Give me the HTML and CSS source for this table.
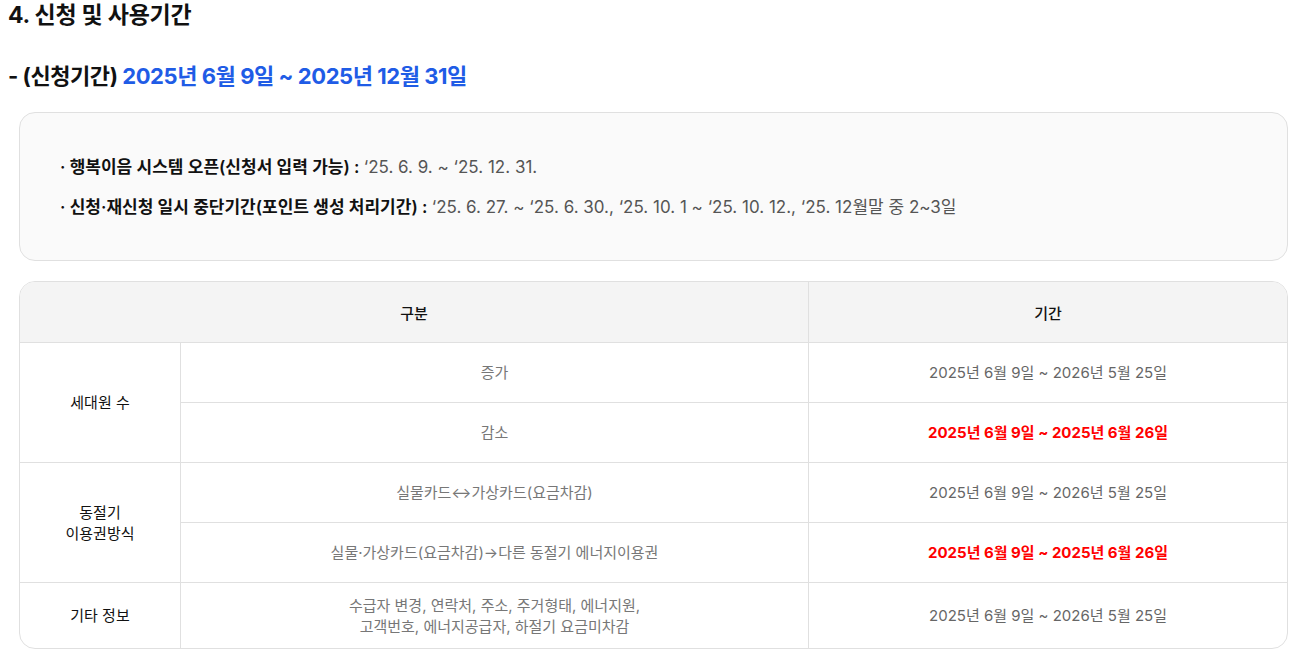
FILE: index.html
```html
<!DOCTYPE html>
<html lang="ko">
<head>
<meta charset="utf-8">
<title>신청 및 사용기간</title>
<link rel="stylesheet" href="styles.css">
</head>
<body>
<section class="section">
  <h2 class="title">4. 신청 및 사용기간</h2>
  <h3 class="subtitle">- (신청기간) <span class="blue">2025년 6월 9일 ~ 2025년 12월 31일</span></h3>

  <div class="info-box">
    <p class="info-line"><strong class="label">· 행복이음 시스템 오픈(신청서 입력 가능) : </strong><span class="value">‘25. 6. 9. ~ ‘25. 12. 31.</span></p>
    <p class="info-line"><strong class="label">· 신청·재신청 일시 중단기간(포인트 생성 처리기간) : </strong><span class="value">‘25. 6. 27. ~ ‘25. 6. 30., ‘25. 10. 1 ~ ‘25. 10. 12., ‘25. 12월말 중 2~3일</span></p>
  </div>

  <div class="table-wrap">
    <table class="period-table">
      <colgroup>
        <col class="c1">
        <col class="c2">
        <col class="c3">
      </colgroup>
      <thead>
        <tr class="head-row">
          <th colspan="2" class="first">구분</th>
          <th>기간</th>
        </tr>
      </thead>
      <tbody>
        <tr class="row">
          <td rowspan="2" class="first cat">세대원 수</td>
          <td class="item">증가</td>
          <td class="date">2025년 6월 9일 ~ 2026년 5월 25일</td>
        </tr>
        <tr class="row">
          <td class="item">감소</td>
          <td class="date red">2025년 6월 9일 ~ 2025년 6월 26일</td>
        </tr>
        <tr class="row">
          <td rowspan="2" class="first cat">동절기<br>이용권방식</td>
          <td class="item">실물카드↔가상카드(요금차감)</td>
          <td class="date">2025년 6월 9일 ~ 2026년 5월 25일</td>
        </tr>
        <tr class="row">
          <td class="item">실물·가상카드(요금차감)→다른 동절기 에너지이용권</td>
          <td class="date red">2025년 6월 9일 ~ 2025년 6월 26일</td>
        </tr>
        <tr class="row last">
          <td class="first cat">기타 정보</td>
          <td class="item">수급자 변경, 연락처, 주소, 주거형태, 에너지원,<br>고객번호, 에너지공급자, 하절기 요금미차감</td>
          <td class="date">2025년 6월 9일 ~ 2026년 5월 25일</td>
        </tr>
      </tbody>
    </table>
  </div>
</section>
</body>
</html>
```

FILE: styles.css
```css
* { box-sizing: border-box; }

html, body {
  margin: 0;
  padding: 0;
  background: #ffffff;
}

body {
  font-family: Inter, "Noto Sans CJK KR", sans-serif;
  color: #111111;
}

.section {
  padding: 0 19px 0 8px;
}

.title {
  margin: 0;
  font-size: 23px;
  line-height: 30px;
  font-weight: 700;
  letter-spacing: -0.01em;
  color: #111;
}

.subtitle {
  margin: 31px 0 0;
  font-size: 22px;
  line-height: 30px;
  font-weight: 700;
  letter-spacing: -0.02em;
  color: #111;
}

.blue { color: #1f5ce6; }

.info-box {
  margin: 21px 0 0 11px;
  padding: 40px 40px 39px;
  background: #fafafa;
  border: 1px solid #e0e0e0;
  border-radius: 16px;
  display: flex;
  flex-direction: column;
  gap: 12px;
}

.info-line {
  margin: 0;
  font-size: 17px;
  line-height: 28px;
}

.label { font-weight: 600; color: #111; }
.value { color: #555; font-weight: 400; }

.table-wrap {
  margin: 20px 0 0 11px;
  border: 1px solid #e0e0e0;
  border-radius: 16px;
  overflow: hidden;
}

.period-table {
  width: 100%;
  border-collapse: separate;
  border-spacing: 0;
  table-layout: fixed;
  font-size: 15px;
}

.c1 { width: 160px; }
.c2 { width: 628px; }
.c3 { width: auto; }

.period-table th,
.period-table td {
  text-align: center;
  vertical-align: middle;
  padding: 0 10px;
  border-left: 1px solid #e0e0e0;
}

.period-table .first { border-left: none; }

.head-row th {
  height: 60px;
  background: #f4f4f4;
  font-weight: 500;
  color: #111;
}

.row td {
  height: 60px;
  border-top: 1px solid #e0e0e0;
  line-height: 21px;
}

.row.last td { height: 66px; }

.cat { color: #111; }
.item { color: #777; }
.date { color: #666; }
.date.red { color: #ff0000; font-weight: 700; }
```
